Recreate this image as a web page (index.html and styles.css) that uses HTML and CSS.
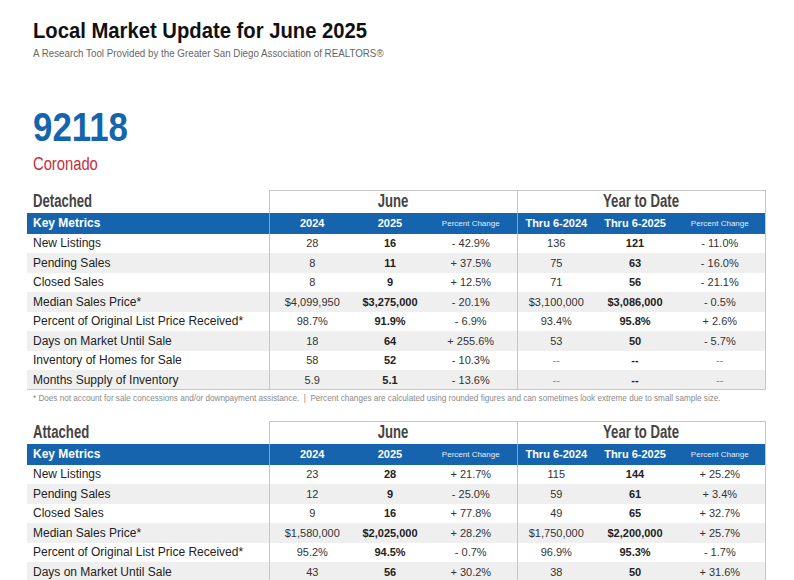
FILE: index.html
```html
<!DOCTYPE html>
<html lang="en">
<head>
<meta charset="utf-8">
<title>Local Market Update for June 2025</title>
<link rel="stylesheet" href="styles.css">
</head>
<body>
<div class="page">
  <header class="hdr">
    <h1 class="title">Local Market Update for June 2025</h1>
    <p class="sub">A Research Tool Provided by the Greater San Diego Association of REALTORS®</p>
  </header>
  <div class="area">
    <div class="zip">92118</div>
    <div class="city">Coronado</div>
  </div>

  <section class="block">
    <table class="mt">
      <colgroup>
        <col class="w-lbl"><col class="w-c1"><col class="w-c2"><col class="w-c3"><col class="w-c4"><col class="w-c5"><col class="w-c6">
      </colgroup>
      <thead>
        <tr class="grp">
          <th class="lbl"><span class="cn">Detached</span></th>
          <th class="g" colspan="3"><span class="cn">June</span></th>
          <th class="g" colspan="3"><span class="cn">Year to Date</span></th>
        </tr>
        <tr class="bar">
          <th class="lbl">Key Metrics</th>
          <th class="s">2024</th><th>2025</th><th class="pc">Percent Change</th>
          <th class="s">Thru 6-2024</th><th>Thru 6-2025</th><th class="pc e">Percent Change</th>
        </tr>
      </thead>
      <tbody>
        <tr><td class="lbl">New Listings</td><td class="s">28</td><td class="b">16</td><td>- 42.9%</td><td class="s">136</td><td class="b">121</td><td class="e">- 11.0%</td></tr>
        <tr><td class="lbl">Pending Sales</td><td class="s">8</td><td class="b">11</td><td>+ 37.5%</td><td class="s">75</td><td class="b">63</td><td class="e">- 16.0%</td></tr>
        <tr><td class="lbl">Closed Sales</td><td class="s">8</td><td class="b">9</td><td>+ 12.5%</td><td class="s">71</td><td class="b">56</td><td class="e">- 21.1%</td></tr>
        <tr><td class="lbl">Median Sales Price*</td><td class="s">$4,099,950</td><td class="b">$3,275,000</td><td>- 20.1%</td><td class="s">$3,100,000</td><td class="b">$3,086,000</td><td class="e">- 0.5%</td></tr>
        <tr><td class="lbl">Percent of Original List Price Received*</td><td class="s">98.7%</td><td class="b">91.9%</td><td>- 6.9%</td><td class="s">93.4%</td><td class="b">95.8%</td><td class="e">+ 2.6%</td></tr>
        <tr><td class="lbl">Days on Market Until Sale</td><td class="s">18</td><td class="b">64</td><td>+ 255.6%</td><td class="s">53</td><td class="b">50</td><td class="e">- 5.7%</td></tr>
        <tr><td class="lbl">Inventory of Homes for Sale</td><td class="s">58</td><td class="b">52</td><td>- 10.3%</td><td class="s na">--</td><td class="b">--</td><td class="e na">--</td></tr>
        <tr><td class="lbl">Months Supply of Inventory</td><td class="s">5.9</td><td class="b">5.1</td><td>- 13.6%</td><td class="s na">--</td><td class="b">--</td><td class="e na">--</td></tr>
      </tbody>
    </table>
    <p class="note">* Does not account for sale concessions and/or downpayment assistance. &nbsp;|&nbsp; Percent changes are calculated using rounded figures and can sometimes look extreme due to small sample size.</p>
  </section>

  <section class="block">
    <table class="mt">
      <colgroup>
        <col class="w-lbl"><col class="w-c1"><col class="w-c2"><col class="w-c3"><col class="w-c4"><col class="w-c5"><col class="w-c6">
      </colgroup>
      <thead>
        <tr class="grp">
          <th class="lbl"><span class="cn">Attached</span></th>
          <th class="g" colspan="3"><span class="cn">June</span></th>
          <th class="g" colspan="3"><span class="cn">Year to Date</span></th>
        </tr>
        <tr class="bar">
          <th class="lbl">Key Metrics</th>
          <th class="s">2024</th><th>2025</th><th class="pc">Percent Change</th>
          <th class="s">Thru 6-2024</th><th>Thru 6-2025</th><th class="pc e">Percent Change</th>
        </tr>
      </thead>
      <tbody>
        <tr><td class="lbl">New Listings</td><td class="s">23</td><td class="b">28</td><td>+ 21.7%</td><td class="s">115</td><td class="b">144</td><td class="e">+ 25.2%</td></tr>
        <tr><td class="lbl">Pending Sales</td><td class="s">12</td><td class="b">9</td><td>- 25.0%</td><td class="s">59</td><td class="b">61</td><td class="e">+ 3.4%</td></tr>
        <tr><td class="lbl">Closed Sales</td><td class="s">9</td><td class="b">16</td><td>+ 77.8%</td><td class="s">49</td><td class="b">65</td><td class="e">+ 32.7%</td></tr>
        <tr><td class="lbl">Median Sales Price*</td><td class="s">$1,580,000</td><td class="b">$2,025,000</td><td>+ 28.2%</td><td class="s">$1,750,000</td><td class="b">$2,200,000</td><td class="e">+ 25.7%</td></tr>
        <tr><td class="lbl">Percent of Original List Price Received*</td><td class="s">95.2%</td><td class="b">94.5%</td><td>- 0.7%</td><td class="s">96.9%</td><td class="b">95.3%</td><td class="e">- 1.7%</td></tr>
        <tr><td class="lbl">Days on Market Until Sale</td><td class="s">43</td><td class="b">56</td><td>+ 30.2%</td><td class="s">38</td><td class="b">50</td><td class="e">+ 31.6%</td></tr>
      </tbody>
    </table>
  </section>
</div>
</body>
</html>
```

FILE: styles.css
```css
* { box-sizing: border-box; }
html, body { margin: 0; padding: 0; background: #fff; }
body {
  font-family: "Liberation Sans", Arial, sans-serif;
  color: #222;
  overflow: hidden;
}
.page { padding: 0 29px 0 27px; }

.hdr { padding: 19px 0 0 6px; }
.title {
  width: max-content;
  margin: 0;
  font-weight: 700;
  font-size: 22px;
  line-height: 24px;
  color: #111;
  transform: scaleX(0.92);
  transform-origin: 0 50%;
}
.sub {
  width: max-content;
  margin: 4px 0 0;
  font-size: 11.5px;
  line-height: 13px;
  color: #666;
  transform: scaleX(0.85);
  transform-origin: 0 50%;
}

.area { padding: 47px 0 0 6px; }
.zip {
  width: max-content;
  font-weight: 700;
  font-size: 41px;
  line-height: 41px;
  color: #1664ad;
  transform: scaleX(0.85);
  transform-origin: 0 50%;
}
.city {
  width: max-content;
  margin-top: 6px;
  font-size: 18px;
  line-height: 20px;
  color: #c52b3d;
  transform: scaleX(0.82);
  transform-origin: 0 50%;
}

.block { margin-top: 16px; }
.block + .block { margin-top: 18px; }

.mt {
  width: 738px;
  table-layout: fixed;
  border-collapse: collapse;
  font-size: 11px;
}
.w-lbl { width: 242px; }
.w-c1 { width: 86px; }
.w-c2 { width: 70px; }
.w-c3 { width: 92px; }
.w-c4 { width: 78px; }
.w-c5 { width: 80px; }
.w-c6 { width: 90px; }

.mt th, .mt td { padding: 0; text-align: center; white-space: nowrap; }

.grp th {
  height: 22px;
  font-weight: 700;
  font-size: 18px;
  color: #444;
  vertical-align: middle;
}
.grp .cn {
  display: inline-block;
  transform: scaleX(0.73);
  transform-origin: 50% 50%;
}
.grp .g { border: 1px solid #c6c6c6; border-bottom: 0; }
.grp .lbl { text-align: left; padding-left: 6px; }
.grp .lbl .cn { transform-origin: 0 50%; }

.bar th {
  height: 21px;
  background: #1664ad;
  color: #fff;
  font-weight: 700;
  font-size: 11px;
}
.bar .lbl { text-align: left; padding-left: 6px; font-size: 12px; }
.bar .pc { font-weight: 400; font-size: 8px; color: #e4ecf6; }

.mt .s { border-left: 1px solid #c6c6c6; }
.mt .e { border-right: 1px solid #c6c6c6; }
.bar .s { border-left-color: #7fa4cf; }

tbody tr { height: 19.5px; }
tbody tr:nth-child(even) { background: #efefef; }
tbody td { color: #333; }
tbody .lbl { text-align: left; padding-left: 6px; color: #222; font-size: 12px; }
tbody .b { font-weight: 700; color: #222; }
tbody .na { color: #888; }
tbody tr:last-child td { border-bottom: 1px solid #c6c6c6; }

.note {
  width: max-content;
  margin: 3px 0 0 6px;
  font-size: 9px;
  line-height: 10px;
  color: #8a8a8a;
  transform: scaleX(0.905);
  transform-origin: 0 50%;
}
```
